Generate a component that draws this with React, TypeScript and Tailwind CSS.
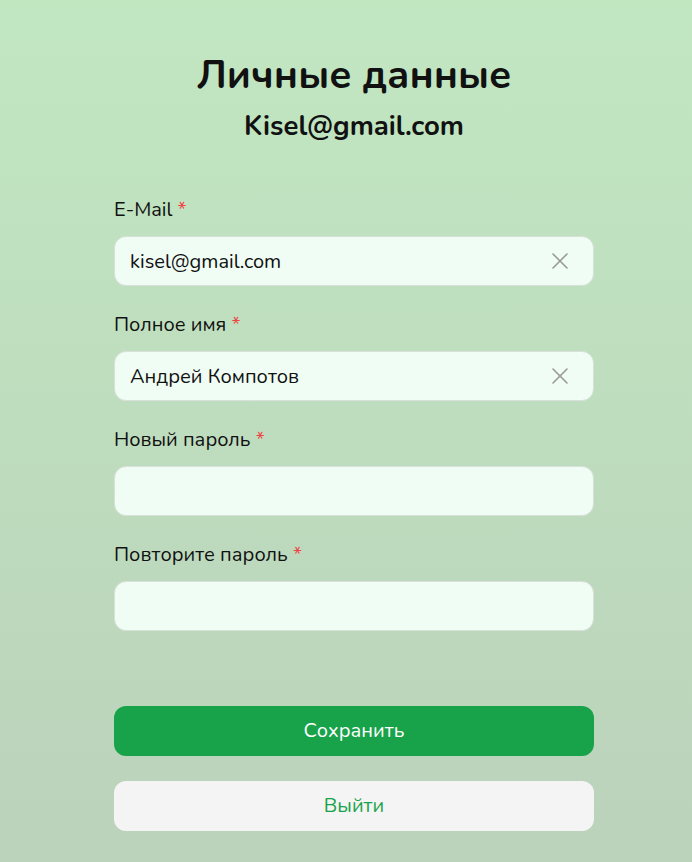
import { X } from "lucide-react";

const fields = [
  { id: "email", label: "E-Mail", value: "kisel@gmail.com", clearable: true },
  { id: "name", label: "Полное имя", value: "Андрей Компотов", clearable: true },
  { id: "password", label: "Новый пароль", value: "", clearable: false },
  { id: "repeat", label: "Повторите пароль", value: "", clearable: false },
];

const fontStyle = { fontFamily: '"Nunito", "Noto Sans", sans-serif' };

export default function App() {
  return (
    <div
      className="min-h-[862px] bg-linear-to-b from-[#c1e7c1] to-[#bbd2bb] pl-4 text-[#111]"
      style={fontStyle}
    >
      <div className="mx-auto w-[480px] pt-[54px]">
        <h1 className="text-center text-[40px] font-bold leading-[42px]">
          Личные данные
        </h1>
        <p className="mt-[14px] text-center text-[27.5px] font-bold leading-8">
          Kisel@gmail.com
        </p>

        <form className="mt-[54px] flex flex-col gap-[25px]">
          {fields.map((field) => (
            <div key={field.id} className="flex flex-col gap-3">
              <label className="text-xl leading-7">
                {field.label} <span className="text-[#ef4444]">*</span>
              </label>
              <div className="flex h-[50px] items-center rounded-xl border border-[#d9dfd9] bg-[#f0fdf4] pr-4 pl-[15px]">
                <input
                  className="min-w-0 flex-1 bg-transparent pt-px text-xl outline-none"
                  type={field.clearable ? "text" : "password"}
                  defaultValue={field.value}
                  style={fontStyle}
                />
                {field.clearable && (
                  <X size={28} strokeWidth={1.4} className="mr-[3px] text-[#9a9a9a]" />
                )}
              </div>
            </div>
          ))}
        </form>

        <div className="mt-[75px] flex flex-col gap-[25px]">
          <button
            type="button"
            className="h-[50px] rounded-xl bg-[#18a34a] text-xl text-white"
          >
            Сохранить
          </button>
          <button
            type="button"
            className="h-[50px] rounded-xl bg-[#f4f4f4] text-xl text-[#18a34a]"
          >
            Выйти
          </button>
        </div>
      </div>
    </div>
  );
}
